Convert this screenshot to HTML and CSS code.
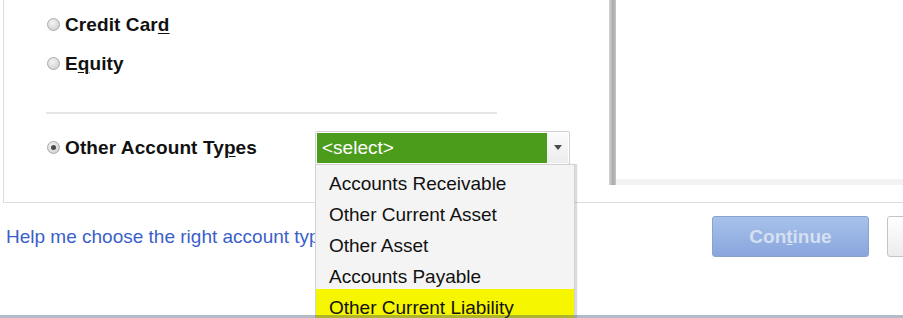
FILE: index.html
```html
<!DOCTYPE html>
<html lang="en">
<head>
  <meta charset="UTF-8">
  <title>Add New Account</title>
  <link rel="stylesheet" href="styles.css">
</head>
<body>
  <div class="top">
    <div class="options">
      <label class="option-row">
        <span class="radio"></span>
        <span class="option-label">Credit Car<u>d</u></span>
      </label>
      <label class="option-row">
        <span class="radio"></span>
        <span class="option-label">E<u>q</u>uity</span>
      </label>

      <div class="separator"></div>

      <div class="option-row other-row">
        <span class="radio checked"></span>
        <span class="option-label other-label">Other Account Ty<u>p</u>es</span>
        <div class="select-wrap">
          <div class="select">
            <span class="select-value">&lt;select&gt;</span>
            <span class="select-arrow"></span>
          </div>
          <ul class="dropdown">
            <li>Accounts Receivable</li>
            <li>Other Current Asset</li>
            <li>Other Asset</li>
            <li>Accounts Payable</li>
            <li class="highlight">Other Current Liability</li>
          </ul>
        </div>
      </div>
    </div>

    <div class="preview">
      <div class="preview-inner"></div>
    </div>
  </div>

  <div class="footer">
    <a class="help-link" href="#">Help me choose the right account type.</a>
    <div class="actions">
      <button class="btn btn-primary" disabled>Con<u>t</u>inue</button>
      <button class="btn btn-secondary" aria-label="Cancel"></button>
    </div>
  </div>

  <div class="window-edge"></div>
</body>
</html>
```

FILE: styles.css
```css
body {
  font-family: "Liberation Sans", Arial, sans-serif;
  font-size: 19px;
  color: #111;
  background-color: #fff;
  margin: 0;
  width: 903px;
  height: 318px;
  overflow: hidden;
}

.top {
  display: flex;
  height: 202px;
  margin-left: 3px;
  border-left: 1px solid #dcdcdc;
  border-bottom: 1px solid #dcdcdc;
}

.options {
  width: 605px;
  padding: 5px 0 0 43px;
  box-sizing: border-box;
  flex-shrink: 0;
}

.option-row {
  display: flex;
  align-items: center;
  height: 39px;
}

.radio {
  width: 11px;
  height: 11px;
  border-radius: 50%;
  border: 1px solid #a9a9a9;
  background: radial-gradient(circle at 40% 35%, #f4f4f4, #c9c9c9);
  margin-right: 5px;
  display: flex;
  align-items: center;
  justify-content: center;
}

.radio.checked::after {
  content: "";
  width: 5px;
  height: 5px;
  border-radius: 50%;
  background-color: #4a4a4a;
}

.option-label {
  font-weight: bold;
  letter-spacing: 0.1px;
}

.option-label u {
  text-decoration-thickness: 1px;
  text-underline-offset: 2px;
}

.separator {
  width: 451px;
  margin: 29px 0 0 -1px;
  border-top: 2px solid #e6e6e6;
}

.other-row {
  margin-top: 14px;
}

.other-label {
  width: 250px;
}

.select-wrap {
  position: relative;
}

.select {
  display: flex;
  width: 251px;
  height: 30px;
  padding: 1px;
  border: 1px solid #cfcfcf;
  border-radius: 2px;
  background-color: #fff;
}

.select-value {
  flex: 1;
  background-color: #4c9c1c;
  color: #fff;
  padding-left: 5px;
  line-height: 29px;
}

.select-arrow {
  width: 21px;
  background: linear-gradient(#fbfbfb, #ececec);
  display: flex;
  align-items: center;
  justify-content: center;
}

.select-arrow::after {
  content: "";
  border-left: 4px solid transparent;
  border-right: 4px solid transparent;
  border-top: 5px solid #4a4a4a;
}

.dropdown {
  position: absolute;
  top: 33px;
  left: 0;
  width: 258px;
  height: 160px;
  margin: 0;
  padding: 0;
  list-style: none;
  background-color: #f4f4f4;
  border: 1px solid #d2d2d2;
  border-bottom: none;
  box-shadow: 2px 0 1px rgba(0, 0, 0, 0.14);
  overflow: hidden;
  z-index: 1;
}

.dropdown li {
  padding: 9px 0 2px 13px;
  line-height: 20px;
  height: 20px;
  color: #111;
}

.dropdown li.highlight {
  background-color: #f6f600;
  height: 40px;
}

.preview {
  flex: 1;
  height: 185px;
  padding: 0 0 6px 7px;
  box-sizing: border-box;
  background: linear-gradient(to right, #d6d6d6 0, #a9a9a9 4px, #c6c6c6 7px, #f3f3f3 7px);
}

.preview-inner {
  height: 100%;
  background-color: #fff;
}

.footer {
  display: flex;
  justify-content: space-between;
  align-items: center;
  height: 112px;
  box-sizing: border-box;
  padding: 13px 0 58px 6px;
}

.help-link {
  color: #3b5fc9;
  text-decoration: none;
  white-space: nowrap;
}

.actions {
  display: flex;
  gap: 18px;
  margin-right: -100px;
}

.btn {
  height: 41px;
  border-radius: 3px;
  font-family: "Liberation Sans", Arial, sans-serif;
  font-size: 19px;
  font-weight: bold;
  cursor: pointer;
}

.btn-primary {
  width: 157px;
  color: #d5e0f3;
  background: linear-gradient(#a7c2ea, #89a5dd);
  border: 1px solid #8ba2cf;
}

.btn-primary u {
  text-decoration-thickness: 1px;
}

.btn-secondary {
  width: 116px;
  background: linear-gradient(#fff, #ececec);
  border: 1px solid #c4c4c4;
}

.window-edge {
  position: relative;
  z-index: 2;
  height: 3px;
  background-color: rgba(55, 75, 115, 0.38);
}
```
